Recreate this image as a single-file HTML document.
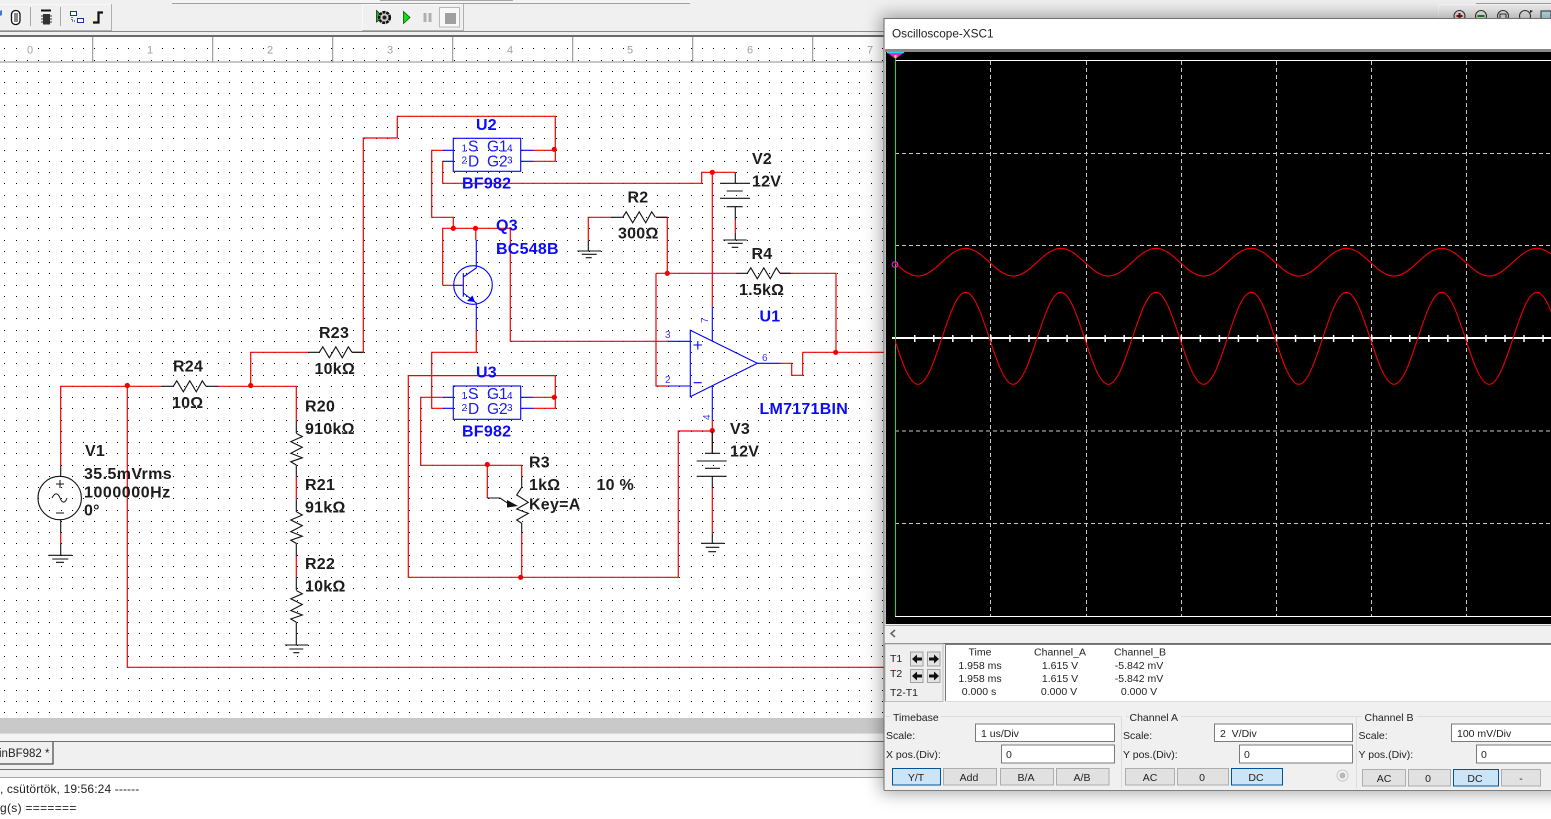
<!DOCTYPE html>
<html>
<head>
<meta charset="utf-8">
<style>
html,body{margin:0;padding:0;background:#fff;width:1551px;height:819px;overflow:hidden}
svg{position:absolute;left:0;top:0;display:block}
#win{position:absolute;left:884px;top:18px;width:720px;height:772px;background:#f0f0f0;box-shadow:0 0 16px 3px rgba(0,0,0,.35)}
text{font-family:"Liberation Sans",sans-serif}
.k{font-size:16px;font-weight:bold;fill:#1c1c1c;letter-spacing:.25px}
.b{font-size:16px;font-weight:bold;fill:#0a0aff;letter-spacing:.25px}
.u{font-size:15.5px;fill:#1a1af0}
.us{font-size:10px;fill:#1a1af0}
.p{font-size:10px;fill:#3a3af0}
.r{fill:none;stroke:#f00000;stroke-width:1.2}
.n{fill:none;stroke:#111;stroke-width:1.1}
.l{fill:none;stroke:#0000ff;stroke-width:1.1}
.t{font-size:10.5px;fill:#222}
.m{text-anchor:middle}
.btn{fill:#e1e1e1;stroke:#adadad}
.sel{fill:#cce4f7;stroke:#005499}
.inp{fill:#fff;stroke:#7a7a7a}
.rt{font-size:11px;fill:#a0a0a0;text-anchor:middle}
</style>
</head>
<body>
<svg width="1551" height="819" viewBox="0 0 1551 819">
<defs>
<pattern id="dots" x="0" y="0" width="45" height="45" patternUnits="userSpaceOnUse">
<path d="M4 3h1v1h-1zM16 3h1v1h-1zM27 3h1v1h-1zM38 3h1v1h-1zM4 15h1v1h-1zM16 15h1v1h-1zM27 15h1v1h-1zM38 15h1v1h-1zM4 26h1v1h-1zM16 26h1v1h-1zM27 26h1v1h-1zM38 26h1v1h-1zM4 37h1v1h-1zM16 37h1v1h-1zM27 37h1v1h-1zM38 37h1v1h-1z" fill="#000"/>
</pattern>
<path id="rh" d="M0 0L3.5-5.5L10 5.5L16.5-5.5L23 5.5L29-5.5L32.7 0" fill="none" stroke="#111" stroke-width="1.1"/>
<path id="rv" d="M0 0L6 3.3L-5.5 8.3L6 14L-5.5 20L6 24.5L-5.5 28.5L0 31.7" fill="none" stroke="#111" stroke-width="1.1"/>
</defs>

<!-- toolbar -->
<rect x="0" y="0" width="1551" height="32" fill="#f0f0f0"/>
<rect x="172" y="0" width="518" height="3" fill="#f4f4f4"/>
<path d="M172 3.5H690" stroke="#a0a0a0"/>
<path d="M380 .5H513" stroke="#a8a8a8"/>
<path d="M0 4.5H111.5V30.5H0" fill="none" stroke="#fafafa"/>
<path d="M111.5 4V31M0 30.5H111" stroke="#b0b0b0"/>
<path d="M362.5 30.5V4.5H463.5" fill="none" stroke="#fafafa"/>
<path d="M463.5 4V31M362 30.5H463" stroke="#b0b0b0"/>
<path d="M30.5 7V26M60.5 7V26" stroke="#a8a8a8"/>
<path d="M0 11L2 10V15L0 16Z" fill="#3a78c8"/>
<rect x="11.5" y="10.5" width="8.5" height="14" rx="4" fill="#fff" stroke="#111" stroke-width="1.3"/>
<path d="M15 13V22M17 13V22" stroke="#111"/>
<path d="M41 10.5H51" stroke="#111" stroke-width="2"/>
<rect x="43" y="14" width="7" height="10.5" fill="#333"/>
<path d="M41 16H52M41 19H52M41 22H52" stroke="#333"/>
<rect x="70.5" y="11.5" width="6" height="4" fill="#fff" stroke="#123a9a"/>
<rect x="77.5" y="18.5" width="6" height="4" fill="#fff" stroke="#123a9a"/>
<path d="M72 17V21H76" fill="none" stroke="#111" stroke-dasharray="1 1"/>
<path d="M93 22.5H98.5V12.5H103" fill="none" stroke="#111" stroke-width="2.2"/>
<path d="M376.5 10.5V22L383 17Z" fill="#18c018" stroke="#111" stroke-width=".7"/>
<circle cx="384.5" cy="17.5" r="5.3" fill="#ccc" stroke="#111" stroke-width="2.6" stroke-dasharray="3 .8"/>
<circle cx="384.5" cy="17.5" r="2" fill="#222"/>
<path d="M403.5 11.5V23.5L410 17.5Z" fill="#10e010" stroke="#0a500a" stroke-width=".8"/>
<path d="M425 13V22M430 13V22" stroke="#b0b0b0" stroke-width="3"/>
<rect x="439.5" y="7.5" width="20" height="19.5" fill="#f8f8f8" stroke="#b8b8b8"/>
<rect x="445" y="13" width="11" height="11" fill="#a0a0a0"/>
<!-- right toolbar -->
<path d="M1438.5 18V4.5H1551" fill="none" stroke="#fafafa"/>
<path d="M1476 3.5H1551" stroke="#a0a0a0"/>
<circle cx="1459.5" cy="16" r="5.5" fill="#eee" stroke="#333"/>
<path d="M1459.5 13V19M1456.5 16H1462.5" stroke="#8a1010" stroke-width="2"/>
<circle cx="1481" cy="16" r="5.5" fill="#eee" stroke="#333"/>
<path d="M1477.5 16H1484.5" stroke="#10901a" stroke-width="2"/>
<circle cx="1503" cy="16" r="5.5" fill="#eee" stroke="#333"/>
<rect x="1500" y="14" width="6" height="5" fill="none" stroke="#333"/>
<circle cx="1525" cy="16" r="5.5" fill="#eee" stroke="#333"/>
<path d="M1530 10L1533 11L1530 13Z" fill="#222"/>
<rect x="1541" y="11" width="10" height="8" fill="#bfeaf0" stroke="#333"/>

<path d="M0 31.5H1551" stroke="#8a8a8a"/>
<rect x="0" y="32" width="1551" height="3" fill="#f0f0f0"/>
<rect x="0" y="35" width="1551" height="2" fill="#6a6a6a"/>

<!-- canvas -->
<rect x="0" y="37" width="890" height="681" fill="#fff"/>
<rect x="0" y="38" width="890" height="680" fill="url(#dots)"/>
<path d="M0 62H890" stroke="#8c8c8c" stroke-width="1"/>
<path d="M92.7 37V62M212.7 37V62M332.7 37V62M452.7 37V62M572.7 37V62M692.7 37V62M812.7 37V62" stroke="#8c8c8c"/>
<rect x="25" y="44" width="10" height="11" fill="#fff"/><rect x="145" y="44" width="10" height="11" fill="#fff"/><rect x="265" y="44" width="10" height="11" fill="#fff"/><rect x="385" y="44" width="10" height="11" fill="#fff"/><rect x="505" y="44" width="10" height="11" fill="#fff"/><rect x="625" y="44" width="10" height="11" fill="#fff"/><rect x="745" y="44" width="10" height="11" fill="#fff"/><rect x="865" y="44" width="10" height="11" fill="#fff"/>
<text class="rt" x="30" y="53.5">0</text><text class="rt" x="150" y="53.5">1</text><text class="rt" x="270" y="53.5">2</text><text class="rt" x="390" y="53.5">3</text><text class="rt" x="510" y="53.5">4</text><text class="rt" x="630" y="53.5">5</text><text class="rt" x="750" y="53.5">6</text><text class="rt" x="870" y="53.5">7</text>

<!-- red wires -->
<g class="r">
<path d="M308 352.3H250.7V386.3M161.3 386.3H60.7V466M218 386.3H296.3V421"/>
<path d="M127.3 386.3V667.3H890"/>
<path d="M352 352.3H363.3V138H397.3V116.3H555.3V161.3H533M533 150.3H555"/>
<path d="M443 150.3H431.7V217.3H453.3V228.3M443 161.3H442.7V183.3H701.7V172.3H735.3"/>
<path d="M712.3 172.3V306.7"/>
<path d="M442.7 285.3V228.3H510.3V341.3H667.3"/>
<path d="M453.3 285.3H442.7M475.8 228.3V240"/>
<path d="M476.3 330V352.3H431.7V408.3H443.3"/>
<path d="M588.3 241V217.3H610.7M656 217.3H667.3V273.3M656 273.3H736.7M656 273.3V386H667.3"/>
<path d="M780 273.3H836V352.3M802.7 352.3H890M802.7 352.3V375.3H791.7V363.3H780"/>
<path d="M533 397.3H555.3V375.6H408.3V577.3H678.3V431H712.3M533 408.3H555.3V397"/>
<path d="M443 397.3H420.7V465.3H521.7V476.7M487.3 465.3V498"/>
<path d="M521.7 532.7V577.3"/>
<path d="M712.3 420V453M712.3 488.3V533.3"/>
<path d="M735.3 220V233"/>
<path d="M60.7 533V543.3"/>
<path d="M296.3 476.7V499.3M296.3 556V577.3"/>
</g>
<g fill="#f00000">
<circle cx="127.3" cy="385.5" r="2.6"/><circle cx="250.7" cy="385.5" r="2.6"/><circle cx="554.3" cy="149.3" r="2.6"/><circle cx="453.3" cy="228.3" r="2.6"/><circle cx="475.5" cy="228.3" r="2.6"/><circle cx="712.3" cy="172.3" r="2.6"/><circle cx="667.3" cy="273.3" r="2.6"/><circle cx="835.7" cy="352.3" r="2.6"/><circle cx="554.3" cy="397.3" r="2.6"/><circle cx="487.3" cy="464.5" r="2.6"/><circle cx="520.7" cy="577.3" r="2.6"/><circle cx="712.3" cy="430.5" r="2.6"/>
</g>

<!-- black parts -->
<g class="n">
<path d="M161.3 386.3H173.3M206 386.3H218M308 352.3H319.3M352 352.3H363.3"/>
<path d="M296.3 421V433.3M296.3 465V476.7M296.3 499.3V511.7M296.3 543.3V556M296.3 577.3V590M296.3 622.3V645"/>
<path d="M285 645H308.3M289.3 649H303.3M293.3 652.7H299.3"/>
<path d="M60.7 466V476M60.7 520V533M60.7 543.3V555.3M48.3 555.3H72M52.3 559H68.3M56 562.3H64"/>
<path d="M610.7 217.3H622.7M656 217.3H667.3"/>
<path d="M736.7 273.3H747.3M780 273.3H790.7"/>
<path d="M588.3 241V251M577.3 251H601M581.7 254.3H596.7M585.7 257.7H591.7"/>
<path d="M735.3 172.3V183.3M720 183.3H750M726.7 191H742.7M720 198.3H750M726.7 206.7H742.7M735.3 206.7V220M735.3 233V240M723.3 240H746.7M727.7 243.3H742.7M731.7 247.3H738.3"/>
<path d="M712.3 431V453.3M705 453.3H720M696.7 461H726.7M705 468.3H720M696.7 476.3H726.7M712.3 476.3V488.3M712.3 533.3V543.3M701 543.3H724M705.7 547.3H719.3M708.3 551.7H716"/>
<path d="M521.7 476.7V487.3M521.7 487.3L516.7 495L528.3 502.3L516.7 509L528.3 513.3L516.7 520L521.7 523.3V532.7"/>
<path d="M487.3 498H500L512 506"/>
</g>
<path d="M507 500L518 506L507 507.5Z" fill="#111"/>
<use href="#rh" x="173.3" y="386.3"/>
<use href="#rh" x="319.3" y="352.3"/>
<use href="#rh" x="622.7" y="217.3"/>
<use href="#rh" x="747.3" y="273.3"/>
<use href="#rv" x="296.3" y="433.3"/>
<use href="#rv" x="296.3" y="511.7"/>
<use href="#rv" x="296.3" y="590.5"/>

<!-- V1 source -->
<circle cx="59.7" cy="498" r="21.7" fill="none" stroke="#111" stroke-width="1.1"/>
<path d="M56 484H64M60 480V488M56 513H64M52 498C55 492 58 493 60 498C62 503 65 504 67 498" fill="none" stroke="#111"/>

<!-- blue parts -->
<g class="l">
<rect x="453.3" y="138.3" width="67.4" height="33"/>
<rect x="453.3" y="386" width="67.4" height="33.3"/>
<path d="M443 150.3H453.3M443 161.3H453.3M520.7 150.3H533M520.7 161.3H533"/>
<path d="M443 397.3H453.3M443 408.3H453.3M520.7 397.3H533M520.7 408.3H533"/>
<path d="M690.3 330.3V396.7L757.3 363.3Z"/>
<path d="M712.3 306.7V341M712.3 386V420M667.3 341.3H690.3M667.3 386H690.3M757.3 363.3H780"/>
<path d="M693.5 345H702M697.8 341V349.5M693.7 382.7H701.7"/>
<circle cx="473" cy="285" r="19.3"/>
<path d="M453.3 285.3H463.3M463.3 273V296.7M463.3 277L476.3 268V240M463.3 293L476.3 303V330"/>
</g>
<path d="M467 301L475 302L472.5 295.5Z" fill="#0000ff"/>
<text class="p" x="665" y="338">3</text><text class="p" x="665" y="383">2</text><text class="p" x="762" y="361">6</text>
<text class="p" transform="translate(708,323) rotate(-90)">7</text>
<text class="p" transform="translate(710,420) rotate(-90)">4</text>

<!-- chip labels -->
<g>
<text class="us" x="461.5" y="151.5">1</text><text class="u" x="468" y="151.5">S</text><text class="u" x="487" y="151.5">G1</text><text class="us" x="507" y="151.5">4</text>
<text class="us" x="461.5" y="163.5">2</text><text class="u" x="468" y="166.5">D</text><text class="u" x="487" y="166.5">G2</text><text class="us" x="507" y="163.5">3</text>
<text class="us" x="461.5" y="399">1</text><text class="u" x="468" y="399">S</text><text class="u" x="487" y="399">G1</text><text class="us" x="507" y="399">4</text>
<text class="us" x="461.5" y="411">2</text><text class="u" x="468" y="414">D</text><text class="u" x="487" y="414">G2</text><text class="us" x="507" y="411">3</text>
</g>
<text class="b" x="476" y="130">U2</text>
<text class="b" x="462" y="188.7">BF982</text>
<text class="b" x="496" y="230.7">Q3</text>
<text class="b" x="496" y="254">BC548B</text>
<text class="b" x="759.5" y="321.7">U1</text>
<text class="b" x="759.5" y="414">LM7171BIN</text>
<text class="b" x="476" y="377.3">U3</text>
<text class="b" x="462" y="436.7">BF982</text>

<text class="k" x="752" y="164">V2</text>
<text class="k" x="752" y="186.7">12V</text>
<text class="k" x="627.5" y="202.7">R2</text>
<text class="k" x="618" y="238.7">300Ω</text>
<text class="k" x="751.5" y="259">R4</text>
<text class="k" x="739" y="295">1.5kΩ</text>
<text class="k" x="730" y="434">V3</text>
<text class="k" x="730" y="456.7">12V</text>
<text class="k" x="529" y="467.7">R3</text>
<text class="k" x="529" y="490">1kΩ</text>
<text class="k" x="529" y="509.3">Key=A</text>
<text class="k" x="596.5" y="490">10 %</text>
<text class="k" x="173" y="371.7">R24</text>
<text class="k" x="172" y="408">10Ω</text>
<text class="k" x="319" y="338">R23</text>
<text class="k" x="314.5" y="374">10kΩ</text>
<text class="k" x="305" y="411.3">R20</text>
<text class="k" x="305" y="434">910kΩ</text>
<text class="k" x="305" y="490">R21</text>
<text class="k" x="305" y="512.7">91kΩ</text>
<text class="k" x="305" y="569">R22</text>
<text class="k" x="305" y="591.7">10kΩ</text>
<text class="k" x="85" y="456">V1</text>
<text class="k" x="84" y="479" style="letter-spacing:.4px">35.5mVrms</text>
<text class="k" x="84" y="497.7" style="letter-spacing:.55px">1000000Hz</text>
<text class="k" x="84" y="515.7">0°</text>

<!-- bottom strips -->
<rect x="0" y="718" width="890" height="15" fill="#c9c9c9"/>
<rect x="0" y="733" width="890" height="9" fill="#f4f4f4"/>
<path d="M0 733.5H890" stroke="#dcdcdc"/>
<rect x="0" y="742" width="890" height="36" fill="#f0f0f0"/>
<path d="M53 741.5H890" stroke="#707070"/>
<path d="M0 769.5H890" stroke="#707070"/>
<path d="M0 777.5H890" stroke="#a8a8a8"/>
<path d="M0 764H53V741.5" fill="#f0f0f0" stroke="#222"/>
<path d="M0 741.5H53" stroke="#707070"/>
<text x="-1" y="757" font-size="11.5" fill="#222">inBF982 *</text>
<rect x="0" y="778" width="890" height="41" fill="#fff"/>
<text x="0" y="793" font-size="12" fill="#222" style="letter-spacing:.12px">, csütörtök, 19:56:24 ------</text>
<text x="0" y="812" font-size="12" fill="#222" style="letter-spacing:.3px">g(s) =======</text>
</svg>

<div id="win"></div>

<svg width="1551" height="819" viewBox="0 0 1551 819">
<defs><clipPath id="cp"><rect x="895" y="52" width="656" height="564"/></clipPath></defs>
<path d="M884 790V18.5H1551" fill="none" stroke="#707070"/>
<rect x="885" y="19" width="666" height="30" fill="#fff"/>
<text x="892" y="37.5" font-size="11.8" fill="#222">Oscilloscope-XSC1</text>
<rect x="885" y="49" width="666" height="3" fill="#8a8a8a"/>
<rect x="885" y="52" width="1" height="574" fill="#c0c0c0"/>
<rect x="886" y="52" width="665" height="572" fill="#000"/>

<!-- scope grid -->
<g stroke="#c8c8c8" stroke-width="1" stroke-dasharray="4 3">
<path d="M990.5 61V616M1086.5 61V616M1181.5 61V616M1276.5 61V616M1371.5 61V616M1466.5 61V616"/>
<path d="M895 153.5H1551M895 245.5H1551M895 431H1551M895 523.5H1551"/>
</g>
<path d="M895 60.5H1551M895 616.5H1551" stroke="#fff"/>
<path d="M892 338H1551" stroke="#fff" stroke-width="2"/>
<path d="M914 338.5H1551" stroke="#fff" stroke-width="7" stroke-dasharray="1.5 17.54"/>
<path d="M895.5 52V616" stroke="#20e020"/>
<!-- traces -->
<g clip-path="url(#cp)" fill="none" stroke="#f00000" stroke-width="1.1">
<path d="M870.4 248.3c17.3 0 30.3 27.8 47.6 27.8s30.3-27.8 47.6-27.8s30.3 27.8 47.6 27.8s30.3-27.8 47.6-27.8s30.3 27.8 47.6 27.8s30.3-27.8 47.6-27.8s30.3 27.8 47.6 27.8s30.3-27.8 47.6-27.8s30.3 27.8 47.6 27.8s30.3-27.8 47.6-27.8s30.3 27.8 47.6 27.8s30.3-27.8 47.6-27.8s30.3 27.8 47.6 27.8s30.3-27.8 47.6-27.8s30.3 27.8 47.6 27.8"/>
<path d="M870.4 292.3c17.3 0 30.3 92 47.6 92s30.3-92 47.6-92s30.3 92 47.6 92s30.3-92 47.6-92s30.3 92 47.6 92s30.3-92 47.6-92s30.3 92 47.6 92s30.3-92 47.6-92s30.3 92 47.6 92s30.3-92 47.6-92s30.3 92 47.6 92s30.3-92 47.6-92s30.3 92 47.6 92s30.3-92 47.6-92s30.3 92 47.6 92"/>
</g>
<circle cx="895" cy="264.5" r="2.8" fill="none" stroke="#f020f0" stroke-width="1.1"/>
<path d="M887 52.5H904L895.5 59Z" fill="#e020e0"/>
<path d="M887 52.5H904" stroke="#20d8e8" stroke-width="1.4"/>
<rect x="894.5" y="55" width="2" height="3" fill="#e8e020"/>

<!-- below plot -->
<rect x="885" y="624" width="666" height="20" fill="#f0f0f0"/>
<path d="M885 625.5H1551" stroke="#a8a8a8"/>
<path d="M895 630L891 633.5L895 637" fill="none" stroke="#666" stroke-width="1.6"/>
<path d="M885 643.5H1551" stroke="#6e6e6e"/>
<rect x="885" y="644" width="58" height="57.5" fill="#efefef" stroke="#bdbdbd"/>
<text class="t" x="890" y="662">T1</text>
<text class="t" x="890" y="677">T2</text>
<text class="t" x="890" y="696">T2-T1</text>
<g fill="#e4e4e4" stroke="#a0a0a0">
<rect x="910.5" y="652" width="12.5" height="14"/><rect x="927.5" y="652" width="12.5" height="14"/>
<rect x="910.5" y="669.5" width="12.5" height="13"/><rect x="927.5" y="669.5" width="12.5" height="13"/>
</g>
<g fill="#111">
<path d="M912 659L917 654.5V657.5H922V660.5H917V663.5Z"/><path d="M939 659L934 654.5V657.5H929V660.5H934V663.5Z"/>
<path d="M912 676L917 671.5V674.5H922V677.5H917V680.5Z"/><path d="M939 676L934 671.5V674.5H929V677.5H934V680.5Z"/>
</g>
<rect x="945" y="644" width="606" height="57.5" fill="#fff"/>
<path d="M945.5 702V644.5H1551" fill="none" stroke="#7a7a7a"/>
<path d="M945 701.5H1551" stroke="#dcdcdc"/>
<g class="t m">
<text x="980" y="655.5">Time</text><text x="1060" y="655.5">Channel_A</text><text x="1140" y="655.5">Channel_B</text>
<text x="980" y="669">1.958 ms</text><text x="1060" y="669">1.615 V</text><text x="1139" y="669">-5.842 mV</text>
<text x="980" y="682">1.958 ms</text><text x="1060" y="682">1.615 V</text><text x="1139" y="682">-5.842 mV</text>
<text x="979" y="695">0.000 s</text><text x="1059" y="695">0.000 V</text><text x="1139" y="695">0.000 V</text>
</g>

<!-- group frames -->
<path d="M886 716.5H890M941 716.5H1121M1121.5 716.5V788M1126 716.5H1129M1181 716.5H1356M1356.5 716.5V788M1357 716.5H1362M1417 716.5H1551" stroke="#dcdcdc" fill="none"/>
<text class="t" x="893" y="721">Timebase</text>
<text class="t" x="1129.5" y="721">Channel A</text>
<text class="t" x="1364.5" y="721">Channel B</text>

<text class="t" x="886" y="739">Scale:</text>
<text class="t" x="886" y="758">X pos.(Div):</text>
<rect class="inp" x="975.5" y="724" width="139" height="17.5"/>
<rect class="inp" x="1001.5" y="745" width="113" height="18"/>
<text class="t" x="981" y="737">1 us/Div</text>
<text class="t" x="1006" y="758">0</text>
<rect class="btn sel" x="892.5" y="768.5" width="48" height="16.5"/>
<rect class="btn" x="943.5" y="768.5" width="53" height="16.5"/>
<rect class="btn" x="1000.5" y="768.5" width="53" height="16.5"/>
<rect class="btn" x="1056.5" y="768.5" width="52.5" height="16.5"/>
<g class="t m"><text x="916" y="781">Y/T</text><text x="969" y="781">Add</text><text x="1026" y="781">B/A</text><text x="1082" y="781">A/B</text></g>

<text class="t" x="1123" y="739">Scale:</text>
<text class="t" x="1123" y="758">Y pos.(Div):</text>
<rect class="inp" x="1214.5" y="724" width="138" height="17.5"/>
<rect class="inp" x="1239.5" y="745" width="113" height="18"/>
<text class="t" x="1220" y="737">2&#160; V/Div</text>
<text class="t" x="1244" y="758">0</text>
<rect class="btn" x="1125.5" y="768.5" width="49" height="16.5"/>
<rect class="btn" x="1177.5" y="768.5" width="51" height="16.5"/>
<rect class="btn sel" x="1231.5" y="768.5" width="51" height="16.5"/>
<g class="t m"><text x="1150" y="781">AC</text><text x="1202" y="781">0</text><text x="1256" y="781">DC</text></g>
<circle cx="1342.5" cy="775.5" r="5.5" fill="#f4f4f4" stroke="#d0d0d0" stroke-width="1.3"/>
<circle cx="1342.5" cy="775.5" r="3" fill="#b8b8b8"/>

<text class="t" x="1358.5" y="739">Scale:</text>
<text class="t" x="1358.5" y="758">Y pos.(Div):</text>
<rect class="inp" x="1451.5" y="724" width="110" height="17.5"/>
<rect class="inp" x="1476.5" y="745" width="90" height="18"/>
<text class="t" x="1457" y="737">100 mV/Div</text>
<text class="t" x="1481" y="758">0</text>
<rect class="btn" x="1362.5" y="769.5" width="43" height="16.5"/>
<rect class="btn" x="1408.5" y="769.5" width="42" height="16.5"/>
<rect class="btn sel" x="1453.5" y="769.5" width="45" height="16.5"/>
<rect class="btn" x="1501.5" y="769.5" width="39" height="16.5"/>
<g class="t m"><text x="1384" y="782">AC</text><text x="1428" y="782">0</text><text x="1475" y="782">DC</text><text x="1521" y="782">-</text></g>

<path d="M884 790.5H1551" stroke="#808080"/>
</svg>
</body>
</html>
